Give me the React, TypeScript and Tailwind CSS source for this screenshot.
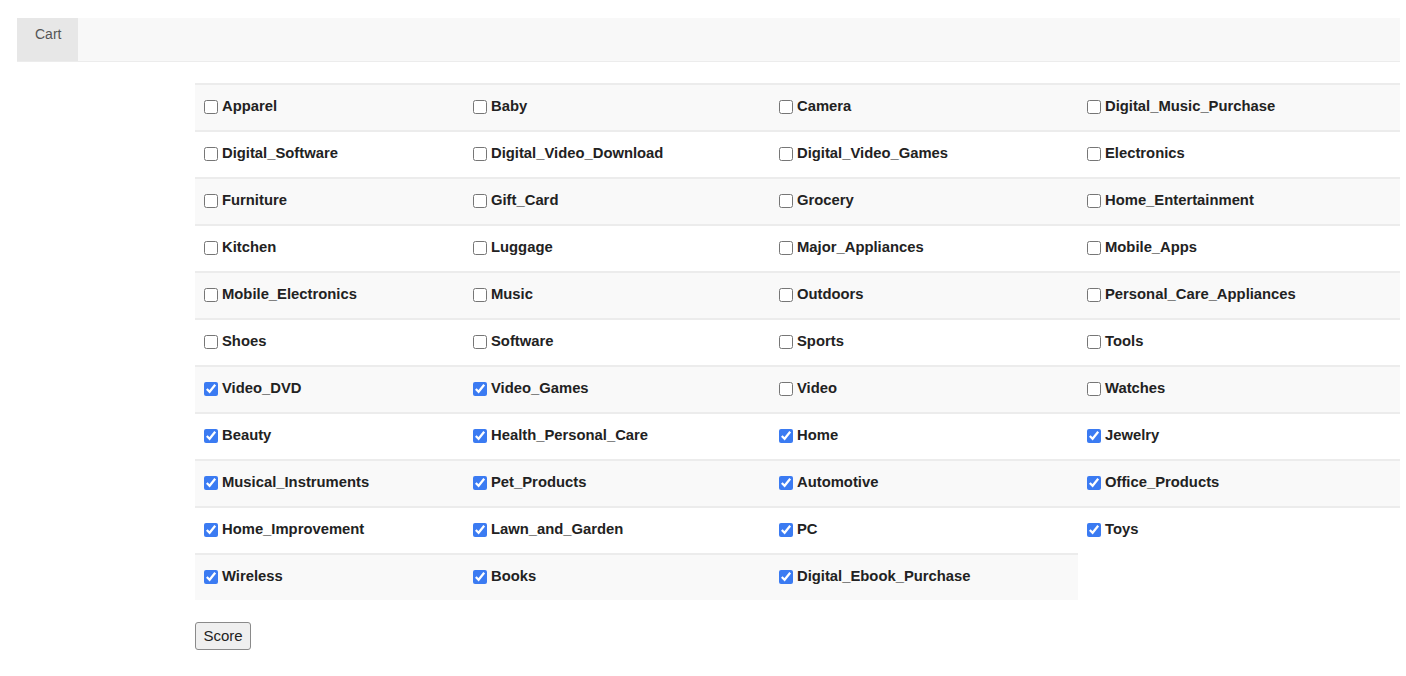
const rows: [string, boolean][][] = [
  [["Apparel", false], ["Baby", false], ["Camera", false], ["Digital_Music_Purchase", false]],
  [["Digital_Software", false], ["Digital_Video_Download", false], ["Digital_Video_Games", false], ["Electronics", false]],
  [["Furniture", false], ["Gift_Card", false], ["Grocery", false], ["Home_Entertainment", false]],
  [["Kitchen", false], ["Luggage", false], ["Major_Appliances", false], ["Mobile_Apps", false]],
  [["Mobile_Electronics", false], ["Music", false], ["Outdoors", false], ["Personal_Care_Appliances", false]],
  [["Shoes", false], ["Software", false], ["Sports", false], ["Tools", false]],
  [["Video_DVD", true], ["Video_Games", true], ["Video", false], ["Watches", false]],
  [["Beauty", true], ["Health_Personal_Care", true], ["Home", true], ["Jewelry", true]],
  [["Musical_Instruments", true], ["Pet_Products", true], ["Automotive", true], ["Office_Products", true]],
  [["Home_Improvement", true], ["Lawn_and_Garden", true], ["PC", true], ["Toys", true]],
  [["Wireless", true], ["Books", true], ["Digital_Ebook_Purchase", true]],
];

const widths = ["w-[269px]", "w-[306px]", "w-[308px]", "w-[322px]"];

function Cell({ label, checked, width, striped }: { label: string; checked: boolean; width: string; striped: boolean }) {
  return (
    <label
      className={`${width} h-[47px] border-t-2 border-[#ececec] flex items-center pl-[9px] pb-[2px] ${striped ? "bg-[#f9f9f9]" : "bg-white"}`}
    >
      <input
        type="checkbox"
        defaultChecked={checked}
        className="w-[14px] h-[14px] m-0 mr-[4px] accent-[#3b7bf2]"
      />
      <span className="text-[14.8px] font-bold text-[#222]">{label}</span>
    </label>
  );
}

export default function App() {
  return (
    <div className="min-h-screen bg-white pt-[18px] font-['Liberation_Sans',Arial,sans-serif]">
      <nav className="ml-[17px] mr-[6px] h-[44px] bg-[#f8f8f8] border-b border-[#ececec] flex">
        <div className="w-[61px] h-full bg-[#e7e7e7] flex items-center pl-[18px] pb-[10px] text-[14px] text-[#555]">
          Cart
        </div>
      </nav>

      <div className="ml-[195px] mr-[6px] mt-[21px]">
        <div className="flex flex-col">
          {rows.map((row, i) => (
            <div key={i} className="flex">
              {row.map(([label, checked], j) => (
                <Cell key={label} label={label} checked={checked} width={widths[j]} striped={i % 2 === 0} />
              ))}
            </div>
          ))}
        </div>

        <button className="mt-[22px] h-[28px] w-[56px] bg-[#efefef] border border-[#8a8a8a] rounded-[3px] text-[15px] text-[#222]">
          Score
        </button>
      </div>
    </div>
  );
}
